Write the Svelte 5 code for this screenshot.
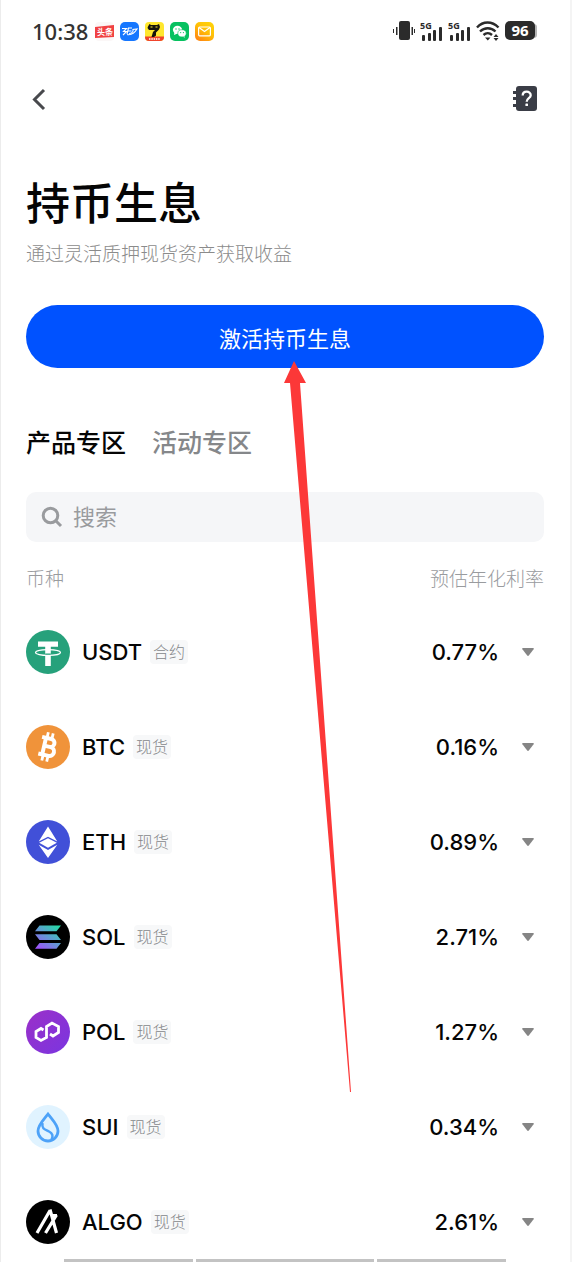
<script>
  let search = "";
  let tab = "products";
  let opened = null;

  const tabs = [
    { id: "products", label: "产品专区" },
    { id: "events", label: "活动专区" },
  ];

  const coins = [
    { symbol: "USDT", tag: "合约", rate: "0.77%" },
    { symbol: "BTC", tag: "现货", rate: "0.16%" },
    { symbol: "ETH", tag: "现货", rate: "0.89%" },
    { symbol: "SOL", tag: "现货", rate: "2.71%" },
    { symbol: "POL", tag: "现货", rate: "1.27%" },
    { symbol: "SUI", tag: "现货", rate: "0.34%" },
    { symbol: "ALGO", tag: "现货", rate: "2.61%" },
  ];

  $: visible = coins.filter((c) => c.symbol.includes(search.trim().toUpperCase()));

  function toggle(symbol) {
    opened = opened === symbol ? null : symbol;
  }
</script>

<div class="page">
  <div class="status">
    <span class="time">10:38</span>
    <div class="apps">
      <svg width="19" height="19" viewBox="0 0 19 19">
        <rect width="19" height="19" rx="4" fill="#fbf7f7" />
        <path d="M0 5 L19 3 V15 L0 16 Z" fill="#f04142" />
        <text x="2" y="13" font-size="8" font-weight="700" fill="#fff">头条</text>
      </svg>
      <svg width="19" height="19" viewBox="0 0 19 19">
        <rect width="19" height="19" rx="5" fill="#1677ff" />
        <path
          d="M2 6.500h4.500l-3 3h3L3 13M8 6h4M7.500 9h4M7 12.500c4 .8 7-.5 10-5.500l-4 .5c.5 2-1 4-4 4M8.500 6L7 12"
          fill="none"
          stroke="#fff"
          stroke-width="1.100"
        />
      </svg>
      <svg width="19" height="19" viewBox="0 0 19 19">
        <rect width="19" height="19" rx="4" fill="#ffe72e" />
        <path d="M0 14.500h19V15a4 4 0 0 1-4 4H4a4 4 0 0 1-4-4Z" fill="#f0442c" />
        <path d="M3 4.500L4.500 2l1.500 1h6l2-1 1 3-1 2.500-3 3v3L9 15H6.500L8 10l2-2H4L2.500 6Z" fill="#15140c" />
        <path d="M5.500 5h2M10.500 5h2" stroke="#ffe72e" />
        <path d="M4 17h11" stroke="#fff" stroke-width="1.500" stroke-dasharray="1.500 .8" />
      </svg>
      <svg width="19" height="19" viewBox="0 0 19 19">
        <rect width="19" height="19" rx="5" fill="#07c160" />
        <path d="M4.500 12.500l.5-2z" fill="#fff" />
        <ellipse cx="7.500" cy="7.800" rx="4.600" ry="4" fill="#fff" />
        <path d="M4 13l.5-3 3 1.500zM15 15.500l-.5-3-3 2z" fill="#fff" />
        <ellipse cx="12" cy="11.300" rx="4.200" ry="3.600" fill="#fff" stroke="#07c160" stroke-width=".6" />
        <g fill="#07c160">
          <circle cx="6" cy="7" r=".7" />
          <circle cx="9" cy="7" r=".7" />
          <circle cx="10.700" cy="10.600" r=".6" />
          <circle cx="13.400" cy="10.600" r=".6" />
        </g>
      </svg>
      <svg width="19" height="19" viewBox="0 0 19 19">
        <defs>
          <linearGradient id="mail" x1="1" y1="0" x2="0.300" y2="1">
            <stop offset="0" stop-color="#ffd60a" />
            <stop offset="0.500" stop-color="#ffc107" />
            <stop offset="1" stop-color="#ff8a12" />
          </linearGradient>
        </defs>
        <rect width="19" height="19" rx="5" fill="url(#mail)" />
        <rect x="3.600" y="5" width="11.800" height="8.800" rx="1" fill="none" stroke="#fff" stroke-width="1.200" />
        <path d="M4 5.500l5.500 4 5.500-4" fill="none" stroke="#fff" stroke-width="1.200" />
      </svg>
    </div>

    <div class="signals">
      <svg width="22" height="20" viewBox="0 0 22 20" fill="#2b2b2b">
        <rect x="6" y="0" width="11" height="19" rx="2" />
        <path d="M0 8h1v4H0zM3 6h1.500v8H3zM18.500 6H20v8h-1.500zM21 8h1v4h-1z" />
      </svg>
      {#each [1, 2] as sim (sim)}
        <svg class="sim" width="23" height="20" viewBox="0 0 23 20" fill="#2b2b2b">
          <text x="0" y="8" font-size="9" font-weight="700">5G</text>
          <rect x="2" y="14" width="3" height="6" rx="1" />
          <rect x="8" y="12" width="3" height="8" rx="1" />
          <rect x="13" y="9" width="3" height="11" rx="1" />
          <rect x="19" y="6" width="3" height="14" rx="1" />
        </svg>
      {/each}
      <svg width="24" height="20" viewBox="0 0 24 20" fill="none" stroke="#2b2b2b" stroke-width="2.400">
        <path d="M1 6.500C7-.2 16-.2 22.500 6.500M4 10.500c4.500-4.400 11-4.400 15.500 0M7.500 14c2.500-2.300 6-2.300 8.500 0" />
        <path d="M9 16.500h5.500l-2.700 3zM17.500 16L20 13l2.500 3zM17.500 17L20 20l2.500-3z" fill="#2b2b2b" stroke="none" />
      </svg>
      <svg class="battery" width="33" height="20" viewBox="0 0 33 20">
        <path d="M28 3c3 0 4 1 4 3v8c0 2-1 3-4 3z" fill="#b5b5b5" />
        <rect width="30" height="19" rx="5" fill="#2b2b2b" />
        <text x="15" y="15" font-size="15" font-weight="700" fill="#fff" text-anchor="middle">96</text>
      </svg>
    </div>
  </div>

  <nav class="nav">
    <button class="icon-btn" aria-label="返回">
      <svg width="26" height="26" viewBox="0 0 26 26" fill="none" stroke="#48494d" stroke-width="3">
        <path d="M18 4L8.500 13.500 18 23" />
      </svg>
    </button>
    <button class="icon-btn" aria-label="帮助">
      <svg width="24" height="26" viewBox="0 0 24 26">
        <rect x="3" y="0" width="21" height="25" rx="3" fill="#3a3d46" />
        <path d="M0 5h4v3H0zM0 11h4v3H0zM0 18h4v3H0z" fill="#3a3d46" />
        <path d="M9.700 9.500c0-5 8-5 8-.3 0 3-4 3-4 6.500" fill="none" stroke="#fff" stroke-width="2.300" />
        <rect x="12.400" y="17.400" width="2.600" height="2.600" rx=".6" fill="#fff" />
      </svg>
    </button>
  </nav>

  <main>
    <h1>持币生息</h1>
    <p class="sub">通过灵活质押现货资产获取收益</p>
    <button class="activate">激活持币生息</button>

    <div class="tabs" role="tablist">
      {#each tabs as t (t.id)}
        <button role="tab" aria-selected={tab === t.id} class:active={tab === t.id} on:click={() => (tab = t.id)}>
          {t.label}
        </button>
      {/each}
    </div>

    <label class="search">
      <svg width="22" height="22" viewBox="0 0 22 22" fill="none" stroke="#999b9e" stroke-width="3">
        <circle cx="9.500" cy="9.500" r="7.300" />
        <path d="M14.500 14.500l5.500 5.500" />
      </svg>
      <input type="text" placeholder="搜索" aria-label="搜索" bind:value={search} />
    </label>

    <table>
      <thead>
        <tr>
          <th scope="col">币种</th>
          <th scope="col" class="right">预估年化利率</th>
        </tr>
      </thead>
      <tbody>
        {#each visible as coin (coin.symbol)}
          <tr>
            <td>
              <div class="coin">
                <svg width="44" height="44" viewBox="0 0 44 44">
                  {#if coin.symbol === "USDT"}
                    <circle cx="22" cy="22" r="22" fill="#26a17b" />
                    <path d="M12 11.500h20v5.300h-7.200V36h-5.600V16.800H12z" fill="#fff" />
                    <ellipse cx="22" cy="22.500" rx="12.500" ry="2.900" fill="none" stroke="#fff" stroke-width="1.200" />
                    <path d="M19.200 23.500h5.600v1.300h-5.600z" fill="#26a17b" />
                  {:else if coin.symbol === "BTC"}
                    <circle cx="22" cy="22" r="22" fill="#f0933a" />
                    <g transform="rotate(13 22 22)" fill="none" stroke="#fff">
                      <path
                        d="M14 13.500h9.500a4 4 0 0 1 0 8H18h6.500a4.500 4.500 0 0 1 0 9H14M18 13v17.500"
                        stroke-width="4"
                      />
                      <path d="M19 7.500v5M24 7.500v5M19 31.500v5M24 31.500v5" stroke-width="2.800" />
                    </g>
                  {:else if coin.symbol === "ETH"}
                    <circle cx="22" cy="22" r="22" fill="#4150d8" />
                    <path d="M22 6.500l9.300 15L22 16.800l-9.300 4.700z" fill="#fff" />
                    <path d="M22 18.200l8.800 4.500L22 27.800l-8.800-5.100z" fill="#fff" />
                    <path d="M12.700 24.800L22 30l9.300-5.200L22 38z" fill="#fff" />
                  {:else if coin.symbol === "SOL"}
                    <defs>
                      <linearGradient id="sol" gradientUnits="userSpaceOnUse" x1="32" y1="9" x2="12" y2="36">
                        <stop offset="0" stop-color="#1fe0a0" />
                        <stop offset="0.450" stop-color="#5c9fd0" />
                        <stop offset="1" stop-color="#a648ff" />
                      </linearGradient>
                    </defs>
                    <circle cx="22" cy="22" r="22" fill="#000" />
                    <path
                      d="M13.500 10.500H35l-4.500 5.800H9zM9 19.300h21.500l4.500 5.600H13.500zM13.500 28H35l-4.500 5.800H9z"
                      fill="url(#sol)"
                    />
                  {:else if coin.symbol === "POL"}
                    <defs>
                      <linearGradient id="pol" x1="0" y1="0" x2="1" y2="1">
                        <stop offset="0" stop-color="#9b30c8" />
                        <stop offset="1" stop-color="#7a35e0" />
                      </linearGradient>
                    </defs>
                    <circle cx="22" cy="22" r="22" fill="url(#pol)" />
                    <path
                      d="M17.500 20l-2.500-1.500-5 3v6l5 3 5.500-3V16.500l5.500-3.500 6.500 3.500v6L27 26l-3-2"
                      fill="none"
                      stroke="#fff"
                      stroke-width="2.800"
                    />
                  {:else if coin.symbol === "SUI"}
                    <circle cx="22" cy="22" r="22" fill="#e0f3ff" />
                    <path
                      d="M22 9c-5 6.500-10 11-10 17a10 10 0 0 0 20 0c0-6-5-10.500-10-17z"
                      fill="none"
                      stroke="#4da2f8"
                      stroke-width="2.800"
                    />
                    <path
                      d="M16.500 18c-1 6 2.500 6.500 6.500 8.500 3.500 1.800 4.500 4.500 2.500 8"
                      fill="none"
                      stroke="#4da2f8"
                      stroke-width="2.500"
                    />
                  {:else}
                    <circle cx="22" cy="22" r="22" fill="#000" />
                    <path
                      d="M11 33L24 10.500M24 9.500l6.500 23.500M19.500 33l11-18M26 15.500h5"
                      fill="none"
                      stroke="#fff"
                      stroke-width="3.200"
                    />
                  {/if}
                </svg>
                <span class="symbol">{coin.symbol}</span>
                <span class="tag">{coin.tag}</span>
              </div>
            </td>
            <td>
              <div class="rate">
                <span>{coin.rate}</span>
                <button
                  aria-label="展开 {coin.symbol}"
                  aria-expanded={opened === coin.symbol}
                  on:click={() => toggle(coin.symbol)}
                >
                  <svg width="12" height="8" viewBox="0 0 12 8" fill="#858585">
                    <path d="M1 0h10q1.500 0 .6 1.200L7 7.300q-1 1.200-2 0L.4 1.200Q-.5 0 1 0z" />
                  </svg>
                </button>
              </div>
            </td>
          </tr>
        {/each}
      </tbody>
    </table>

    <div class="bottom-bar">
      <i></i><i></i><i></i>
    </div>
  </main>

  <!-- pointer to the activate button -->
  <svg class="pointer" width="68" height="732" viewBox="0 0 68 732" aria-hidden="true">
    <path d="M10 0L22 22H16L67 731H66L6 22H0Z" fill="#fc3838" />
  </svg>
</div>

<style>
  :global(body) {
    margin: 0;
    background: #fff;
  }

  .page {
    position: relative;
    box-sizing: border-box;
    border-left: 1px solid #ececec;
    border-right: 2px solid #f4f4f4;
    padding: 0 26px 0 25px;
    color: #050505;
    font-family: "Inter", "Noto Sans CJK SC", sans-serif;
  }

  button {
    border: 0;
    padding: 0;
    background: none;
    color: inherit;
    font-family: inherit;
    cursor: pointer;
  }

  svg {
    display: block;
    flex: none;
  }

  .status {
    display: flex;
    align-items: center;
    height: 62px;
    padding: 0 6px;
    font-family: "Noto Sans", "Noto Sans CJK SC", sans-serif;
  }

  .time {
    color: #333;
    font-size: 22px;
    font-weight: 500;
  }

  .apps {
    display: flex;
    gap: 6px;
    margin-left: 7px;
  }

  .signals {
    display: flex;
    align-items: center;
    gap: 5px;
    margin-left: auto;
  }

  .nav {
    display: flex;
    align-items: center;
    justify-content: space-between;
    height: 74px;
    padding-right: 7px;
  }

  .icon-btn {
    display: flex;
  }

  h1 {
    margin: 0;
    padding-top: 38px;
    font-size: 44px;
    font-weight: 500;
    line-height: 60px;
  }

  .sub {
    margin: 7px 0 36px;
    color: #8b8b8b;
    font-size: 19px;
    font-weight: 300;
    line-height: 28px;
  }

  .activate {
    display: block;
    width: 100%;
    height: 63px;
    border-radius: 32px;
    background: #0052ff;
    color: #fff;
    font-size: 22px;
    font-weight: 400;
  }

  .tabs {
    display: flex;
    gap: 26px;
    margin: 57px 0 31px;
  }

  .tabs button {
    color: #85878a;
    font-size: 25px;
    font-weight: 500;
    line-height: 36px;
  }

  .tabs button.active {
    color: #050505;
  }

  .search {
    display: flex;
    align-items: center;
    gap: 10px;
    height: 50px;
    padding: 0 15px;
    border-radius: 10px;
    background: #f5f6f8;
  }

  .search input {
    flex: 1;
    min-width: 0;
    border: 0;
    padding: 0;
    outline: 0;
    background: none;
    font-family: inherit;
    font-size: 22px;
  }

  .search input::placeholder {
    color: #999b9e;
  }

  table {
    width: 100%;
    margin-top: 22px;
    border-collapse: collapse;
  }

  th {
    padding: 0 0 9px;
    color: #999b9e;
    font-size: 19px;
    font-weight: 300;
    line-height: 32px;
    text-align: left;
  }

  th.right {
    text-align: right;
  }

  td {
    padding: 25px 0 26px;
  }

  tr:last-child td {
    padding-bottom: 15px;
  }

  .coin {
    display: flex;
    align-items: center;
  }

  .symbol {
    margin-left: 12px;
    font-size: 22px;
    font-weight: 500;
  }

  .tag {
    margin-left: 8px;
    padding: 0 3px;
    border-radius: 4px;
    background: #f7f8f9;
    color: #85878a;
    font-size: 16px;
    font-weight: 300;
    line-height: 24px;
  }

  .rate {
    display: flex;
    align-items: center;
    justify-content: flex-end;
    gap: 13px;
    font-size: 22px;
    font-weight: 500;
  }

  .rate button {
    display: flex;
    align-items: center;
    justify-content: center;
    width: 32px;
    height: 32px;
  }

  .bottom-bar {
    display: grid;
    grid-template-columns: 129fr 178fr 129fr;
    gap: 3px;
    padding: 0 38px;
  }

  .bottom-bar i {
    height: 3px;
    background: #c3c3c3;
  }

  .pointer {
    position: absolute;
    top: 361px;
    left: calc(50% - 2px);
    pointer-events: none;
  }
</style>
